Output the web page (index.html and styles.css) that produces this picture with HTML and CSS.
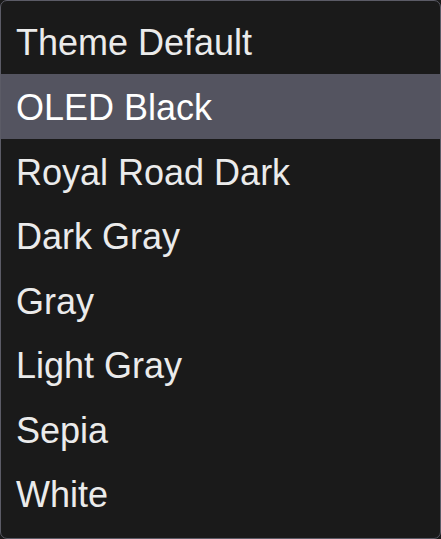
FILE: index.html
```html
<!DOCTYPE html>
<html lang="en">
<head>
    <meta charset="UTF-8">
    <meta name="viewport" content="width=device-width, initial-scale=1.0">
    <title>Theme Picker</title>
    <link rel="stylesheet" href="styles.css">
</head>
<body>
    <ul class="theme-list">
        <li class="theme-item">Theme Default</li>
        <li class="theme-item active">OLED Black</li>
        <li class="theme-item">Royal Road Dark</li>
        <li class="theme-item">Dark Gray</li>
        <li class="theme-item">Gray</li>
        <li class="theme-item">Light Gray</li>
        <li class="theme-item">Sepia</li>
        <li class="theme-item">White</li>
    </ul>
</body>
</html>
```

FILE: styles.css
```css
html, body {
    margin: 0;
    padding: 0;
    background-color: #1a1a1a;
}
body {
    font-family: Arial, "Liberation Sans", sans-serif;
}
.theme-list {
    list-style: none;
    margin: 0;
    padding: 8.4px 0 0 0;
    width: 441px;
    height: 539px;
    box-sizing: border-box;
    background-color: #1a1a1a;
    border: 1px solid #5b5b66;
    border-radius: 7px;
}
.theme-item {
    height: 62.57px;
    line-height: 64.57px;
    padding: 2px 15px 0 15px;
    font-size: 36px;
    color: #ebebeb;
}
.theme-item.active {
    background-color: #545460;
    color: #ffffff;
}
```
